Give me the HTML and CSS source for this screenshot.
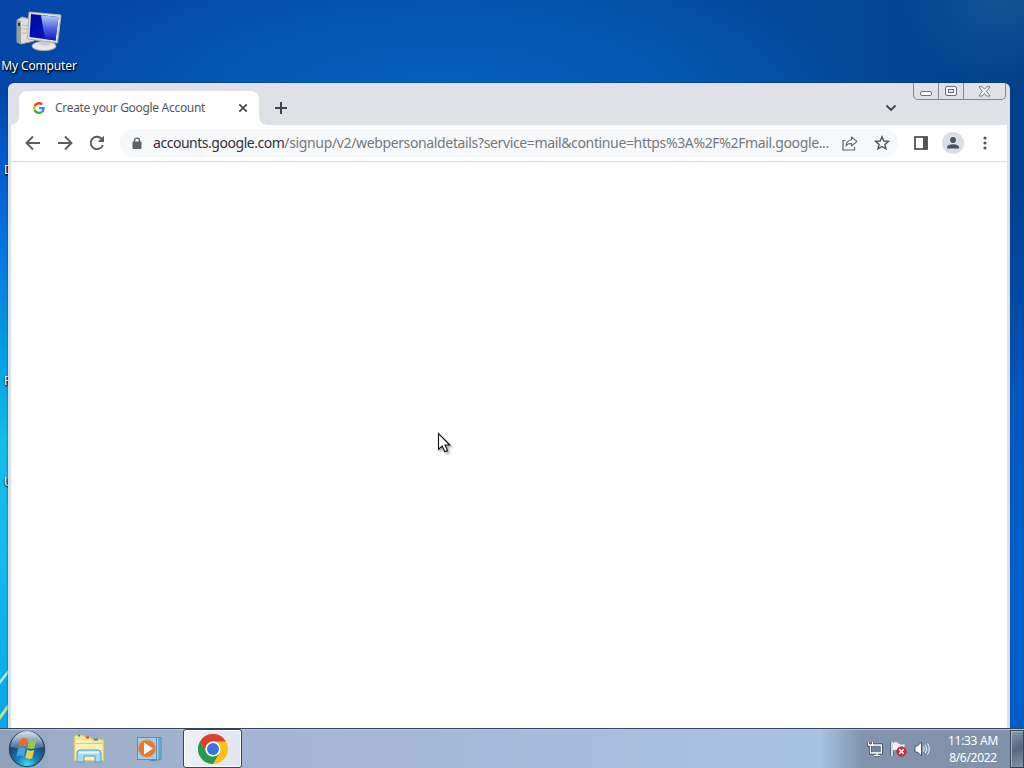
FILE: index.html
```html
<!DOCTYPE html>
<html lang="en">
<head>
    <meta charset="UTF-8">
    <title>Create your Google Account</title>
    <link rel="stylesheet" href="styles.css">
</head>
<body>
    <div class="desktop">
        <div class="wallpaper">
            <svg class="rays" width="8" height="90" viewBox="0 0 8 90">
                <path d="M0 42 L8 32 L8 36 L0 46Z" fill="#a6ecfa"/>
                <path d="M0 77 L8 66 L8 71 L0 82Z" fill="#b5e889"/>
            </svg>

            <div class="shortcut">
                <svg width="48" height="44" viewBox="0 0 48 44">
                    <defs>
                        <linearGradient id="screen" x1="0" y1="0" x2="1" y2="1">
                            <stop offset="0" stop-color="#0008a8"/>
                            <stop offset="1" stop-color="#0618bc"/>
                        </linearGradient>
                        <linearGradient id="shine" x1="0" y1="0" x2="0" y2="1">
                            <stop offset="0" stop-color="#b8cbff"/>
                            <stop offset=".5" stop-color="#5068e2"/>
                            <stop offset="1" stop-color="#1018b8"/>
                        </linearGradient>
                    </defs>
                    <path d="M4 13 L9 10 L21 13 V34 L8 37 L4 35Z" fill="#dedfda" stroke="#a4a7a6"/>
                    <path d="M4 13 L8 14 V37 L4 35Z" fill="#999e9d"/>
                    <path d="M9 18 L17 19 M9 22 L17 22 M9 26 L17 26" stroke="#b9bbb8"/>
                    <rect x="5" y="16" width="2" height="3" fill="#333"/>
                    <ellipse cx="31" cy="39" rx="12" ry="4.6" fill="#e8e9e6" stroke="#a8adac"/>
                    <path d="M28 32 L36 33 L37 38 Q31 40 26 37Z" fill="#c9cccb"/>
                    <path d="M16 5 L48 8 L44.5 36 L14.5 32Z" fill="#e1e2dc" stroke="#aeb3b2"/>
                    <path d="M18 7 L45.5 10 L42.5 33.5 L16.5 30Z" fill="url(#screen)"/>
                    <path d="M28 8.2 L45.5 10 L42.5 33.5 L32 32Z" fill="url(#shine)"/>
                </svg>
                <span>My Computer</span>
            </div>
            <span class="label label-d">D</span>
            <span class="label label-r">R</span>
            <span class="label label-u">U</span>

            <div class="browser">
                <div class="tab-strip">
                    <div class="tab">
                        <svg width="12" height="12" viewBox="0 0 48 48">
                            <path fill="#EA4335" d="M24 9.5c3.5 0 6.7 1.2 9.2 3.6l6.9-6.9C35.9 2.4 30.5 0 24 0 14.6 0 6.5 5.4 2.6 13.2l8 6.2C12.4 13.7 17.7 9.5 24 9.5z"/>
                            <path fill="#4285F4" d="M47 24.6c0-1.6-.2-3.1-.4-4.6H24v9h12.9c-.6 3-2.2 5.5-4.7 7.2l7.7 6C44.4 38 47 31.8 47 24.6z"/>
                            <path fill="#FBBC05" d="M10.5 28.6c-.5-1.5-.8-3-.8-4.6s.3-3.1.8-4.6l-8-6.2C.9 16.5 0 20.1 0 24s.9 7.5 2.6 10.8z"/>
                            <path fill="#34A853" d="M24 48c6.5 0 11.9-2.1 15.9-5.8l-7.7-6c-2.2 1.5-4.9 2.3-8.2 2.3-6.3 0-11.6-4.2-13.5-9.9l-8 6.2C6.5 42.6 14.6 48 24 48z"/>
                        </svg>
                        <span class="tab-title">Create your Google Account</span>
                        <svg width="10" height="10" viewBox="0 0 10 10"><path d="M1.3 1.3 L8.7 8.7 M8.7 1.3 L1.3 8.7" stroke="#45484c" stroke-width="1.7"/></svg>
                    </div>
                    <svg class="new-tab" width="12" height="12" viewBox="0 0 12 12"><path d="M6 0 V12 M0 6 H12" stroke="#404347" stroke-width="2"/></svg>
                    <svg class="tab-search" width="12" height="8" viewBox="0 0 12 8"><path d="M1.5 1.5 L6 6 L10.5 1.5" fill="none" stroke="#404347" stroke-width="1.8"/></svg>
                    <div class="caption">
                        <div class="min"><svg width="13" height="7" viewBox="0 0 13 7"><rect x=".5" y="1.5" width="11" height="4" rx="1.5" fill="#fff" stroke="#6c7078"/></svg></div>
                        <div class="max"><svg width="13" height="11" viewBox="0 0 13 11"><rect x=".5" y=".5" width="11" height="9" rx="1.5" fill="#f5f6f7" stroke="#6c7078"/><rect x="3.5" y="3.5" width="5" height="3" fill="#e5e7ea" stroke="#6c7078"/></svg></div>
                        <div class="close"><svg width="13" height="11" viewBox="0 0 13 11"><path d="M1 .8 H4.3 L6.5 3 L8.7 .8 H12 L8.7 5.3 L12 10 H8.7 L6.5 7.4 L4.3 10 H1 L4.3 5.3Z" fill="#f5f6f7" stroke="#6c7078" stroke-width=".9"/></svg></div>
                    </div>
                </div>

                <div class="toolbar">
                    <svg class="nav" width="16" height="16" viewBox="0 0 16 16"><path d="M15 8 H2 M8 1.5 L1.5 8 L8 14.5" fill="none" stroke="#5a5d61" stroke-width="1.9"/></svg>
                    <svg class="nav" width="16" height="16" viewBox="0 0 16 16"><path d="M1 8 H14 M8 1.5 L14.5 8 L8 14.5" fill="none" stroke="#5a5d61" stroke-width="1.9"/></svg>
                    <svg class="nav" width="16" height="16" viewBox="0 0 16 16"><path d="M13.8 10 A6.2 6.2 0 1 1 12.4 3.6 L14 5.2" fill="none" stroke="#5a5d61" stroke-width="1.9"/><path d="M15 .8 V7 H8.8Z" fill="#5a5d61"/></svg>
                    <div class="omnibox">
                        <svg width="10" height="13" viewBox="0 0 10 13"><path d="M2.5 6 V3.6 a2.5 2.5 0 0 1 5 0 V6" fill="none" stroke="#5f6368" stroke-width="1.4"/><rect x=".5" y="4.5" width="9" height="7.5" rx="1" fill="#5f6368"/></svg>
                        <span class="url"><b>accounts.google.com</b>/signup/v2/webpersonaldetails?service=mail&amp;continue=https%3A%2F%2Fmail.google...</span>
                        <svg class="share" width="16" height="15" viewBox="0 0 16 15"><path d="M3.5 4.5 H1 V14 H12.5 V11" fill="none" stroke="#606468" stroke-width="1.2"/><path d="M9.5 1 L15 5.4 L9.5 10 V7.4 Q6 7.2 4 10 Q4.5 4.4 9.5 3.7Z" fill="none" stroke="#606468" stroke-width="1.1" stroke-linejoin="round"/></svg>
                        <svg class="star" width="16" height="16" viewBox="0 0 16 16"><path d="M8 1.8 L9.8 6 L14.4 6.4 L10.9 9.4 L12 13.9 L8 11.5 L4 13.9 L5.1 9.4 L1.6 6.4 L6.2 6Z" fill="none" stroke="#505458" stroke-width="1.4"/></svg>
                    </div>
                    <svg class="side" width="14" height="14" viewBox="0 0 14 14"><rect x="1" y="1" width="12" height="12" fill="#fff" stroke="#505458" stroke-width="1.8"/><rect x="9" y="1" width="4.5" height="12" fill="#505458"/></svg>
                    <div class="avatar"><svg width="12" height="12" viewBox="0 0 12 12"><circle cx="6" cy="3" r="2.9" fill="#4b5362"/><path d="M0 11.6 V10 Q1 7.2 6 7.2 Q11 7.2 12 10 V11.6Z" fill="#4b5362"/></svg></div>
                    <svg class="menu" width="4" height="14" viewBox="0 0 4 14" fill="#54575b"><circle cx="2" cy="2" r="1.6"/><circle cx="2" cy="7" r="1.6"/><circle cx="2" cy="12" r="1.6"/></svg>
                </div>
                <div class="page"></div>
            </div>

            <svg class="cursor" width="18" height="24" viewBox="0 0 18 24">
                <path d="M1.5 1.5 V17.5 L5.2 14 L7.8 19.8 L10.6 18.6 L8 13 H12.8Z" fill="#fff" stroke="#111" stroke-width="1.1"/>
            </svg>
        </div>

        <div class="taskbar">
            <svg class="start" width="38" height="38" viewBox="0 0 38 38">
                <defs>
                    <radialGradient id="orb" cx=".5" cy=".95" r=".85">
                        <stop offset="0" stop-color="#3de0f4"/>
                        <stop offset=".35" stop-color="#1283b8"/>
                        <stop offset=".75" stop-color="#1c4876"/>
                        <stop offset="1" stop-color="#6d8fab"/>
                    </radialGradient>
                    <linearGradient id="gloss" x1="0" y1="0" x2="0" y2="1">
                        <stop offset="0" stop-color="#e0eaf2" stop-opacity=".9"/>
                        <stop offset="1" stop-color="#a4b8cc" stop-opacity=".3"/>
                    </linearGradient>
                </defs>
                <circle cx="19" cy="19" r="17.6" fill="url(#orb)" stroke="#2b455f" stroke-width="1.2"/>
                <path d="M3 17 A16 16 0 0 1 35 17 Q19 21 3 17Z" fill="url(#gloss)"/>
                <path d="M12.5 9.5 Q16 7 19.5 9 L18 17 Q14.5 15 10.5 17.2Z" fill="#ee6a2c"/>
                <path d="M21 9.8 Q24.5 12 28.5 9.6 L26.5 18 Q23 20 19.5 17.8Z" fill="#96c94b"/>
                <path d="M10 18.8 Q14 16.5 17.6 18.7 L16 26.5 Q12.5 24.4 8.5 26.5Z" fill="#46a4dc"/>
                <path d="M19.2 19.5 Q22.5 21.7 26.3 19.8 L24.2 28 Q21 30 17.4 27.5Z" fill="#fac83c"/>
            </svg>
            <svg class="explorer" width="34" height="30" viewBox="0 0 34 30">
                <path d="M2 3 Q2 1 4 1 H12 L13 3 H19 L20 5 H29 Q32 5 32 7 V27 H2Z" fill="#f5e39a" stroke="#cdb467"/>
                <path d="M4 6 H19 L20 9 H30 V26 H4Z" fill="#fbf0b5"/>
                <path d="M6 1.5 H8" stroke="#28a147" stroke-width="2"/>
                <path d="M14 3.5 H17" stroke="#d84a2b" stroke-width="2"/>
                <path d="M22 5.5 H26" stroke="#3784c6" stroke-width="2"/>
                <path d="M3 9.5 H31" stroke="#e2cb77"/>
                <path d="M5 28 V19 Q5 16 8 16 H26 Q29 16 29 19 V28 H23 V22 H12 V28Z" fill="#a4dbef" stroke="#569dc2"/>
                <path d="M7 18.5 H27" stroke="#e1f7fc" stroke-width="2"/>
            </svg>
            <svg class="player" width="30" height="28" viewBox="0 0 30 28">
                <path d="M15 4 L25 2.5 V24 L15 26Z" fill="#8fc0e2" stroke="#4c87b6"/>
                <path d="M13 2.5 H23 V25 H13Z" fill="#a2d1ed" stroke="#4c87b6"/>
                <rect x="1.5" y="2.5" width="19" height="22" fill="#a7cee9" stroke="#5294bf"/>
                <circle cx="11" cy="13.5" r="8.7" fill="#e87928" stroke="#d9a377"/>
                <path d="M8 7.5 L17 13.5 L8 19.5Z" fill="#fff"/>
            </svg>
            <div class="task-active">
                <svg width="30" height="30" viewBox="0 0 30 30">
                    <circle cx="15" cy="15" r="15" fill="#fbc116"/>
                    <path d="M2 7.5 A15 15 0 0 1 28 7.5 H15 A7.5 7.5 0 0 0 8.5 18.7Z" fill="#dc4032"/>
                    <path d="M2 7.5 A15 15 0 0 0 15 30 L21.5 18.7 A7.5 7.5 0 0 1 8.5 18.7Z" fill="#249b50"/>
                    <circle cx="15" cy="15" r="7.6" fill="#fff"/>
                    <circle cx="15" cy="15" r="6" fill="#3675e4"/>
                </svg>
            </div>
            <div class="tray">
                <svg width="16" height="16" viewBox="0 0 16 16">
                    <path d="M5 4 H14.5 V12 H5.5 M7 14.5 H13 M1.5 1 V4 H5.5 V1 M3.5 4 V12 H6" fill="none" stroke="#26394c" stroke-width="3"/>
                    <path d="M5 4 H14.5 V12 H5.5" fill="#71849a"/>
                    <path d="M5 4 H14.5 V12 H5.5 M7 14.5 H13 M10 12 V15" fill="none" stroke="#fff" stroke-width="1.3"/>
                    <path d="M1.5 1 V4 H5.5 V1 M3.5 4 V12 H6" fill="none" stroke="#fff" stroke-width="1.4"/>
                </svg>
                <svg width="17" height="16" viewBox="0 0 17 16">
                    <path d="M2 .5 V15.5" stroke="#34485c" stroke-width="3"/>
                    <path d="M2 .5 V15.5" stroke="#fff" stroke-width="1.6"/>
                    <path d="M3 2 Q6 0 8.5 2.5 Q11 4.5 14.5 3 V10 Q10 12 8 9.5 Q6 8 3 9.5Z" fill="#eff3f6"/>
                    <circle cx="11.5" cy="10.5" r="4.8" fill="#d52e35" stroke="#a9242b" stroke-width=".6"/>
                    <path d="M9.3 8.3 L13.7 12.7 M13.7 8.3 L9.3 12.7" stroke="#fff" stroke-width="1.6"/>
                </svg>
                <svg width="17" height="16" viewBox="0 0 17 16">
                    <path d="M1 5 H3.5 L7.5 1 V15 L3.5 11 H1Z" fill="#fff" stroke="#34485c" stroke-width=".9"/>
                    <path d="M9.5 5.5 Q11 8 9.5 10.5 M11.5 4 Q14 8 11.5 12 M13.5 2.5 Q17 8 13.5 13.5" fill="none" stroke="#eef3f7" stroke-width="1"/>
                </svg>
            </div>
            <div class="clock"><span class="time">11:33 AM</span><span class="date">8/6/2022</span></div>
            <div class="show-desktop"></div>
        </div>
    </div>
</body>
</html>
```

FILE: styles.css
```css
body {
    margin: 0;
    font-family: "Noto Sans", "Open Sans", sans-serif;
    overflow: hidden;
}

svg {
    display: block;
    flex: none;
}

.desktop {
    width: 1024px;
    height: 768px;
    display: flex;
    flex-direction: column;
}

.wallpaper {
    flex: 1;
    position: relative;
    overflow: hidden;
    background:
        linear-gradient(to bottom, rgba(5, 87, 200, 0) 0, #0557c8 60px, #0573dd 150px, #0599e0 250px, #12bde9 350px, #17b9ee 470px, #08a6ea 638px) 0 90px / 9px 638px no-repeat,
        linear-gradient(to bottom, rgba(0, 65, 145, 0) 0, #004191 100px, #004aa5 216px, #0058be 316px, #0061cc 516px, #005dc8 644px) 100% 84px / 16px 644px no-repeat,
        radial-gradient(ellipse 100px 90px at 1000px 0, rgba(30, 95, 155, 0.6), transparent 100%),
        radial-gradient(ellipse 420px 130px at 440px 90px, #0560bc 0, #0458b4 45%, transparent 100%),
        linear-gradient(to right, #0346a8, #034da8 50%, #024a98 80%, #003f88);
}

.rays {
    position: absolute;
    left: 0;
    top: 638px;
}

.shortcut {
    position: absolute;
    left: 0;
    top: 7px;
    width: 78px;
    display: flex;
    flex-direction: column;
    align-items: center;
    gap: 6px;
}

.shortcut svg {
    overflow: visible;
    margin-right: 5px;
}

.shortcut span,
.label {
    color: #fff;
    font-size: 12px;
    line-height: 17px;
    letter-spacing: -0.15px;
    white-space: nowrap;
    text-shadow: 1px 1px 2px #000, 0 1px 2px #000;
}

.label {
    position: absolute;
    left: 4px;
}

.label-d {
    top: 161px;
}

.label-r {
    top: 372px;
}

.label-u {
    top: 473px;
}

.browser {
    position: absolute;
    left: 8px;
    top: 83px;
    width: 1002px;
    height: 645px;
    box-sizing: border-box;
    padding: 0 3px;
    border-radius: 6px 6px 0 0;
    background: linear-gradient(#dfe1e6, #d9e0e8);
    box-shadow: 0 0 2px #073b70;
    display: flex;
    flex-direction: column;
}

.tab-strip {
    height: 42px;
    display: flex;
    align-items: flex-start;
}

.tab {
    position: relative;
    width: 240px;
    height: 34px;
    margin: 8px 0 0 8px;
    padding: 0 11px 0 14px;
    box-sizing: border-box;
    border-radius: 8px 8px 0 0;
    background: #fff;
    display: flex;
    align-items: center;
}

.tab:before,
.tab:after {
    content: "";
    position: absolute;
    bottom: 0;
    width: 8px;
    height: 8px;
}

.tab:before {
    left: -8px;
    background: radial-gradient(circle at 0 0, transparent 7.5px, #fff 8px);
}

.tab:after {
    right: -8px;
    background: radial-gradient(circle at 100% 0, transparent 7.5px, #fff 8px);
}

.tab-title {
    flex: 1;
    margin-left: 10px;
    padding-bottom: 1px;
    font-size: 12px;
    letter-spacing: -0.31px;
    color: #55585c;
    white-space: nowrap;
}

.new-tab {
    margin: 19px 0 0 16px;
}

.tab-search {
    margin: 21px 16px 0 auto;
}

.caption {
    display: flex;
    width: 93px;
    height: 17px;
    margin-right: 1px;
    box-sizing: border-box;
    border: 1px solid #85888f;
    border-top: 0;
    border-radius: 0 0 5px 5px;
}

.caption div {
    display: flex;
    align-items: center;
    justify-content: center;
    box-sizing: border-box;
}

.min {
    width: 25px;
    padding-top: 4px;
    border-right: 1px solid #85888f;
}

.max {
    width: 25px;
    border-right: 1px solid #85888f;
}

.close {
    flex: 1;
}

.toolbar {
    height: 37px;
    box-sizing: border-box;
    padding-left: 14px;
    background: #fff;
    border-bottom: 1px solid #d9dce1;
    display: flex;
    align-items: center;
}

.nav {
    margin-right: 16px;
}

.omnibox {
    width: 778px;
    height: 28px;
    margin-left: -1px;
    padding: 0 9px 0 12px;
    box-sizing: border-box;
    border-radius: 14px;
    background: #f7f8f9;
    display: flex;
    align-items: center;
}

.url {
    width: 689px;
    flex: none;
    margin-left: 11px;
    padding-bottom: 1px;
    font-size: 14px;
    letter-spacing: -0.36px;
    color: #75787c;
    white-space: nowrap;
}

.url b {
    font-weight: normal;
    letter-spacing: -0.47px;
    color: #303236;
}

.star {
    margin-left: 16px;
}

.side {
    margin-left: 16px;
}

.avatar {
    width: 22px;
    height: 22px;
    margin-left: 14px;
    border-radius: 50%;
    background: #dadee5;
    display: flex;
    align-items: center;
    justify-content: center;
}

.menu {
    margin-left: 19px;
}

.page {
    flex: 1;
    background: #fff;
}

.cursor {
    position: absolute;
    left: 437px;
    top: 432px;
    filter: drop-shadow(2px 2px 1px rgba(0, 0, 0, 0.3));
}

.taskbar {
    height: 40px;
    box-sizing: border-box;
    border-top: 1px solid #31445c;
    box-shadow: inset 0 1px #b7c6d8;
    background: linear-gradient(to right, #8fa0b8 0, #9badc8 60px, #a2b5d2 260px, #a7bddb 600px, #a7c3e0 820px, #8194ac 862px, #8092a8 1024px);
    display: flex;
    align-items: center;
}

.start {
    margin-left: 8px;
}

.explorer {
    margin-left: 26px;
}

.player {
    margin-left: 30px;
}

.task-active {
    width: 59px;
    height: 39px;
    margin-left: 17px;
    box-sizing: border-box;
    border: 1px solid #34465a;
    border-radius: 3px;
    background: linear-gradient(100deg, #eef1f7, #dfe4ef);
    box-shadow: inset 0 0 0 1px #fff;
    display: flex;
    align-items: center;
    justify-content: center;
}

.tray {
    margin-left: auto;
    margin-right: 5px;
    display: flex;
    gap: 7px;
}

.clock {
    width: 74px;
    display: flex;
    flex-direction: column;
    align-items: center;
    color: #fff;
    font-size: 12px;
    line-height: 17px;
    letter-spacing: -0.3px;
    white-space: nowrap;
}

.show-desktop {
    width: 14px;
    height: 38px;
    box-sizing: border-box;
    border: 1px solid #35475a;
    box-shadow: inset 1px 1px #a9b5c1;
    background: linear-gradient(160deg, #8998a8, #56687c 50%, #8292a4);
}
```
